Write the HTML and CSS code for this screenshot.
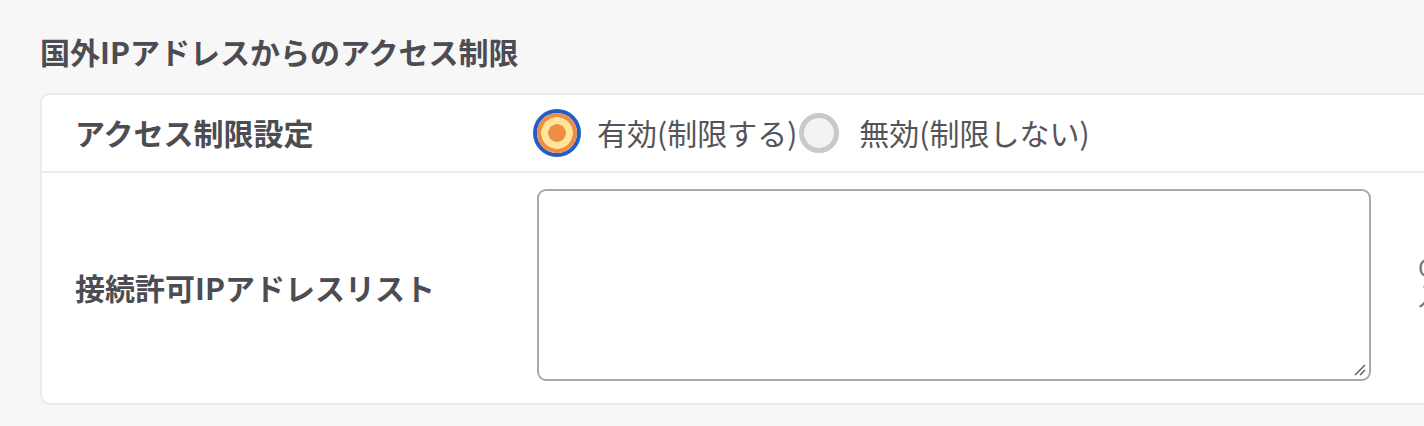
FILE: index.html
```html
<!DOCTYPE html>
<html lang="ja">
<head>
<meta charset="utf-8">
<title>国外IPアドレスからのアクセス制限</title>
<link rel="stylesheet" href="styles.css">
</head>
<body>
<section class="section">
  <h2 class="section-title">国外IPアドレスからのアクセス制限</h2>
  <div class="card">
    <div class="row row-access">
      <div class="row-label">アクセス制限設定</div>
      <div class="row-value radios">
        <label class="radio-item">
          <span class="radio radio-checked"></span>
          <span class="radio-text">有効(制限する)</span>
        </label>
        <label class="radio-item">
          <span class="radio"></span>
          <span class="radio-text">無効(制限しない)</span>
        </label>
      </div>
    </div>
    <div class="row row-list">
      <div class="row-label">接続許可IPアドレスリスト</div>
      <div class="row-value list-value">
        <div class="textarea">
          <svg class="resize" width="12" height="12" viewBox="0 0 12 12"><path d="M1 11 L11 1 M6 11 L11 6" stroke="#555" stroke-width="1.4" fill="none"/></svg>
        </div>
        <div class="help">CIDR表記で<br>入力可能です</div>
      </div>
    </div>
  </div>
</section>
</body>
</html>
```
FILE: styles.css
```css
html, body {
  margin: 0;
  padding: 0;
  background: #f7f7f7;
  overflow: hidden;
  width: 1424px;
  height: 426px;
}
body {
  font-family: "Noto Sans CJK JP", "Noto Sans", sans-serif;
  color: #4c4c52;
}
.section {
  padding: 31px 0 0 40px;
}
.section-title {
  margin: 0 0 22px 0;
  font-size: 30px;
  line-height: 40px;
  font-weight: 700;
  color: #4c4c52;
}
.card {
  width: 1500px;
  background: #fff;
  border: 2px solid #ebebeb;
  border-radius: 10px;
  box-sizing: border-box;
}
.row {
  display: flex;
  align-items: center;
}
.row-access {
  height: 76px;
  border-bottom: 2px solid #ebebeb;
}
.row-list {
  height: 230px;
}
.row-label {
  width: 495px;
  padding-left: 33px;
  padding-bottom: 3px;
  box-sizing: border-box;
  font-size: 30px;
  font-weight: 700;
  color: #4c4c52;
  flex: none;
}
.radios {
  display: flex;
  align-items: center;
  gap: 2px;
}
.radio-item {
  display: flex;
  align-items: center;
  gap: 20px;
}
.radio {
  width: 40px;
  height: 40px;
  box-sizing: border-box;
  border-radius: 50%;
  border: 5px solid #c9c9cb;
  background: #f3f3f6;
  flex: none;
}
.radio-checked {
  border: none;
  background: radial-gradient(circle, #ee8d43 0 8.5px, #fde69c 9px 15.5px, #ee8d43 16px 20px);
  box-shadow: 0 0 0 4px #1f5ec9;
}
.radio-text {
  font-size: 30px;
  color: #555559;
  line-height: 1;
  padding-bottom: 3px;
}
.list-value {
  display: flex;
  align-items: center;
  gap: 47px;
}
.textarea {
  position: relative;
  width: 834px;
  height: 192px;
  margin-bottom: 6px;
  box-sizing: border-box;
  border: 2px solid #a9a9ae;
  border-radius: 9px;
  background: #fff;
  flex: none;
}
.resize {
  position: absolute;
  right: 3px;
  bottom: 3px;
}
.help {
  font-size: 24px;
  line-height: 28px;
  color: #77777c;
  white-space: nowrap;
  margin-top: -14px;
}
```
